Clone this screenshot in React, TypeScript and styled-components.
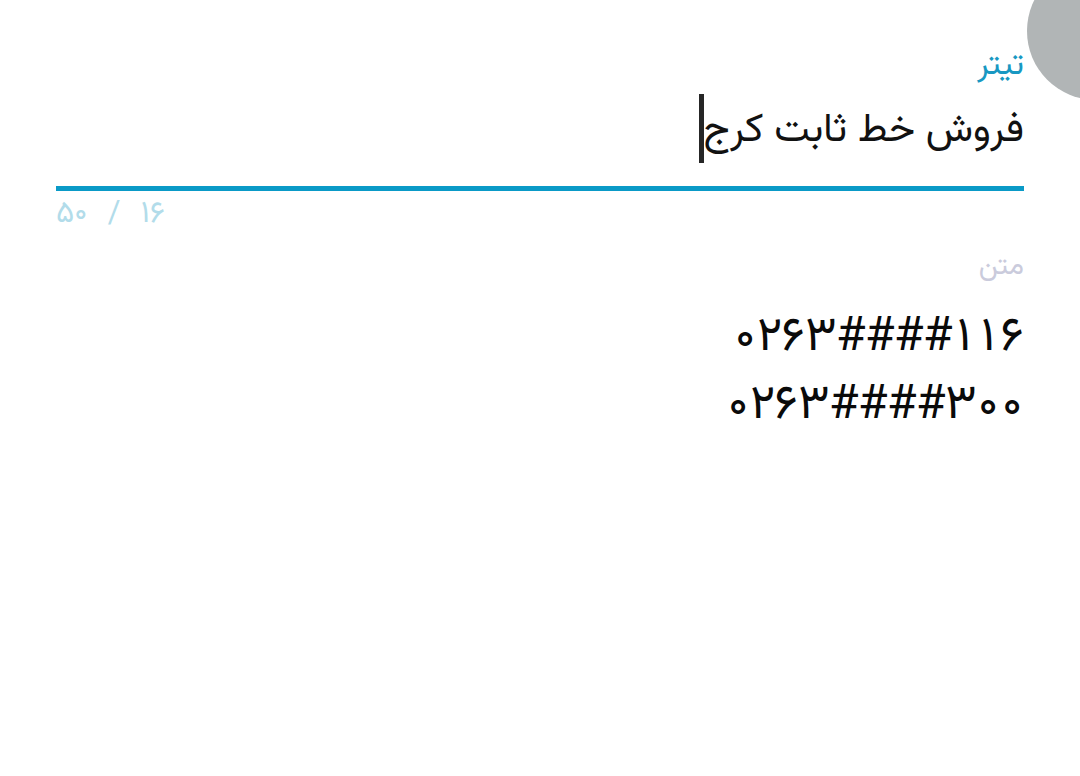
import React from "react";
import styled, { createGlobalStyle } from "styled-components";

const FONT = `"Vazirmatn", "Noto Sans Arabic", "DejaVu Sans", sans-serif`;

const Global = createGlobalStyle`
  html, body { margin: 0; padding: 0; background: #ffffff; }
  body { font-family: ${FONT}; }
`;

const Page = styled.div`
  position: relative;
  width: 1080px;
  height: 776px;
  overflow: hidden;
  background: #ffffff;
  direction: rtl;
  font-family: ${FONT};
`;

const Form = styled.div`
  display: flex;
  flex-direction: column;
  padding: 46px 56px 0 56px;
`;

const Label = styled.div<{ $color: string }>`
  font-size: 33px;
  line-height: 40px;
  color: ${(p) => p.$color};
`;

const TitleRow = styled.div`
  display: flex;
  align-items: center;
  height: 70px;
  margin-top: 7px;
`;

const TitleText = styled.span`
  font-size: 40px;
  color: #111111;
  line-height: 1;
  padding-top: 6px;
`;

const Caret = styled.span`
  display: inline-block;
  width: 5px;
  height: 69px;
  background: #262626;
`;

const Underline = styled.div`
  height: 5px;
  background: #0a9ac7;
  margin-top: 23px;
`;

const Counter = styled.div`
  align-self: flex-end;
  font-size: 31px;
  line-height: 36px;
  word-spacing: 12px;
  color: #b2dcea;
  margin-top: 6px;
`;

const BodyLabel = styled(Label)`
  margin-top: 15px;
  font-size: 28px;
  line-height: 38px;
`;

const Lines = styled.div`
  display: flex;
  flex-direction: column;
  gap: 20px;
  margin-top: 29px;
`;

const Line = styled.div`
  direction: ltr;
  text-align: right;
  font-size: 48px;
  line-height: 48px;
  color: #0a0a0a;
  white-space: nowrap;
`;

const Glyph = styled.span<{ $w: number }>`
  display: inline-block;
  width: ${(p) => p.$w}px;
  text-align: center;
`;

const Blob = styled.div`
  position: absolute;
  left: 1027px;
  top: -38px;
  width: 138px;
  height: 138px;
  border-radius: 50%;
  background: #b1b5b6;
`;

const lines = ["۰۲۶۳####۱۱۶", "۰۲۶۳####۳۰۰"];
const widthOf = (c: string) => (c === "۳" ? 31 : c === "#" ? 29 : 24);

export default function App() {
  return (
    <Page>
      <Global />
      <Form>
        <Label $color="#1898c2">تیتر</Label>
        <TitleRow>
          <TitleText>فروش خط ثابت کرج</TitleText>
          <Caret />
        </TitleRow>
        <Underline />
        <Counter>۱۶ / ۵۰</Counter>
        <BodyLabel $color="#cacbdc">متن</BodyLabel>
        <Lines>
          {lines.map((l, i) => (
            <Line key={i}>
              {Array.from(l).map((c, j) => (
                <Glyph key={j} $w={widthOf(c)}>
                  {c}
                </Glyph>
              ))}
            </Line>
          ))}
        </Lines>
      </Form>
      <Blob />
    </Page>
  );
}
